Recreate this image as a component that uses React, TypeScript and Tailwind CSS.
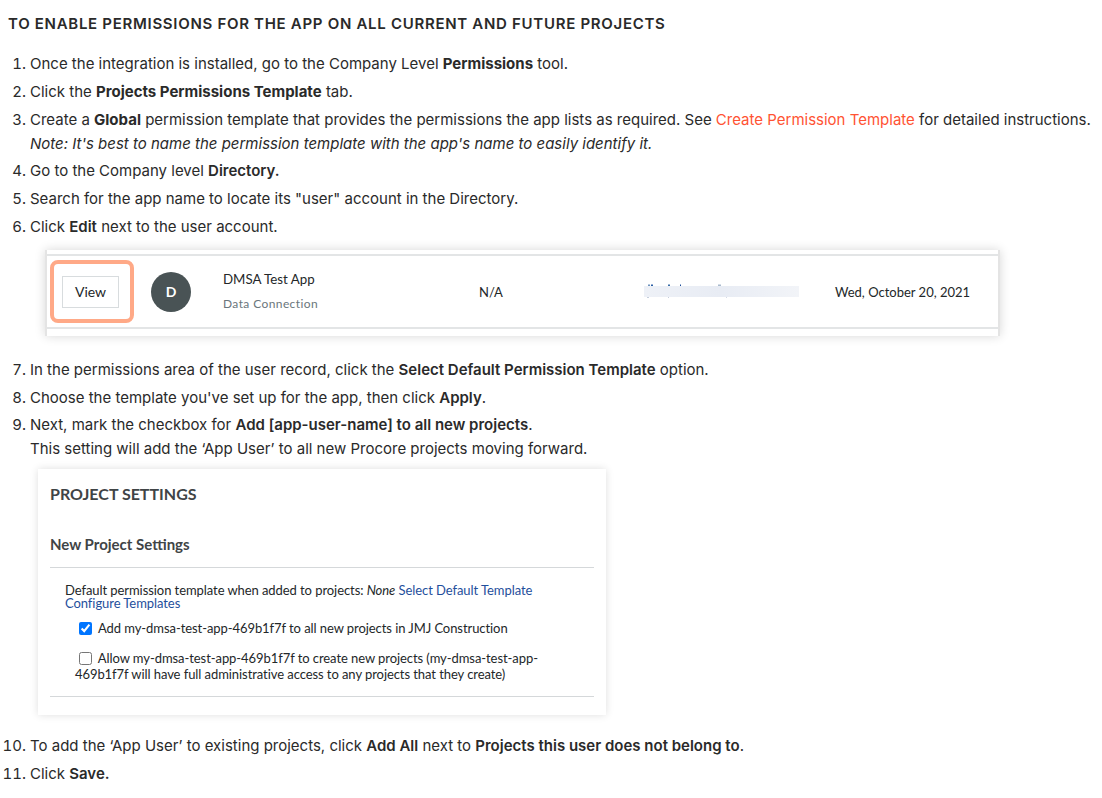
import type { ReactNode } from 'react';

function Step({ children, className = 'mb-1' }: { children: ReactNode; className?: string }) {
  return <li className={className}>{children}</li>;
}

/** Redacted email: blurred strip with the tops and tails of the letters poking out */
function RedactedEmail() {
  return (
    <div className="relative w-[155px] h-[11px]">
      <div className="h-full bg-gradient-to-r from-[#eef1f7] via-[#e8ecf4] to-[#f2f4f8] blur-[0.5px]" />
      <svg className="absolute left-0 top-[-2px]" width="155" height="15" viewBox="0 0 155 15">
        <rect x="4" y="0.5" width="2" height="1.5" fill="#6f93bd" />
        <rect x="7" y="0.5" width="2" height="1.5" fill="#2a5fa5" />
        <rect x="24" y="0.5" width="2" height="1.5" fill="#3a6ea8" />
        <rect x="36" y="0.5" width="1" height="1.5" fill="#1d4f9c" />
        <rect x="74" y="0.5" width="3" height="1.5" fill="#a9bacd" />
        <rect x="3" y="13" width="2" height="1" fill="#c5cedd" />
        <rect x="24" y="13" width="1" height="1" fill="#c5cedd" />
        <rect x="82" y="13" width="1" height="1" fill="#d5dbe6" />
      </svg>
    </div>
  );
}

/** Directory row screenshot */
function DirectoryCard() {
  return (
    <div className="mt-[11px] mb-[22px] ml-[15px] w-[955px] h-[86px] bg-white pt-1 pb-2 border-x-2 border-[#e4e4e4] shadow-[0_0_10px_rgba(0,0,0,0.16)] [font-family:Lato,sans-serif]">
      <div className="flex items-center h-[75px] border-y-2 border-[#e3e5e6] pl-[3px]">
        <div className="flex items-center w-[84px] h-[63px] pl-2 border-[4px] border-[#ffa987] rounded-lg">
          <div className="flex items-center justify-center w-[57px] h-8 border border-[#d8dcde] text-sm text-[#232729]">View</div>
        </div>
        <div className="flex items-center justify-center w-10 h-10 ml-[17px] rounded-full bg-[#495355] text-sm font-bold text-white">D</div>
        <div className="ml-8 w-[256px]">
          <div className="-mt-px text-[13.3px] leading-4 text-[#232729]">DMSA Test App</div>
          <div className="mt-[9px] text-xs leading-4 tracking-[0.4px] text-[#6a767c]">Data Connection</div>
        </div>
        <div className="w-[165px] text-[13px] text-[#232729]">N/A</div>
        <RedactedEmail />
        <div className="ml-9 text-[13px] text-[#232729]">Wed, October 20, 2021</div>
      </div>
    </div>
  );
}

/** Project settings screenshot */
function SettingsCard() {
  return (
    <div className="mt-2 mb-[19px] ml-2 w-[568px] h-[246px] bg-white px-3 shadow-[0_0_8px_rgba(0,0,0,0.13)] [font-family:Lato,sans-serif] text-[#232729]">
      <h3 className="pt-[14px] text-base leading-[22px] font-bold text-[#3f4446]">PROJECT SETTINGS</h3>
      <h4 className="mt-[29px] text-[15px] leading-5 font-bold text-[#3f4446]">New Project Settings</h4>
      <div className="mt-[13px] pl-[15px] pt-4 pb-[14px] border-y border-[#d5d8da] text-[13px] leading-[13px] tracking-[-0.07px]">
        <p>
          Default permission template when added to projects: <em>None</em>{' '}
          <span className="text-[#1f4f9c]">Select Default Template</span>
        </p>
        <p className="text-[#1f4f9c]">Configure Templates</p>
        <label className="flex items-center gap-[6px] mt-[10px] ml-[14px] leading-4">
          <input type="checkbox" defaultChecked className="m-0 w-[13px] h-[13px]" />
          <span>Add my-dmsa-test-app-469b1f7f to all new projects in JMJ Construction</span>
        </label>
        <p className="mt-[14px] ml-[10px] leading-4 w-[480px]">
          <input type="checkbox" className="m-0 ml-1 mr-[3px] w-[13px] h-[13px] align-[-2px]" /> Allow my-dmsa-test-app-469b1f7f to create new projects (my-dmsa-test-app-469b1f7f will have full administrative access to any projects that they create)
        </p>
      </div>
    </div>
  );
}

export default function App() {
  return (
    <div className="min-h-[798px] bg-white px-2 pt-[15px] [font-family:Inter,sans-serif] text-[15px] leading-6 text-[#2a2a2a]">
      <h2 className="text-[15px] leading-[18px] font-semibold tracking-[0.7px] uppercase">
        To enable permissions for the app on all current and future projects
      </h2>
      <ol className="mt-[19px] list-decimal pl-[22px]">
        <Step>Once the integration is installed, go to the Company Level <b className="font-bold">Permissions</b> tool.</Step>
        <Step>Click the <b className="font-bold">Projects Permissions Template</b> tab.</Step>
        <Step className="mb-[3px]">
          Create a <b className="font-bold">Global</b> permission template that provides the permissions the app lists as required. See{' '}
          <span className="text-[#ff5333]">Create Permission Template</span> for detailed instructions.
          <br />
          <em>Note: It's best to name the permission template with the app's name to easily identify it.</em>
        </Step>
        <Step>Go to the Company level <b className="font-semibold">Directory.</b></Step>
        <Step>Search for the app name to locate its "user" account in the Directory.</Step>
        <li>
          Click <b className="font-semibold">Edit</b> next to the user account.
          <DirectoryCard />
        </li>
        <Step>In the permissions area of the user record, click the <b className="font-semibold">Select Default Permission Template</b> option.</Step>
        <Step className="mb-[3px]">Choose the template you've set up for the app, then click <b className="font-semibold">Apply</b>.</Step>
        <li>
          Next, mark the checkbox for <b className="font-semibold">Add [app-user-name] to all new projects</b>.
          <br />
          This setting will add the ‘App User’ to all new Procore projects moving forward.
          <SettingsCard />
        </li>
        <Step>To add the ‘App User’ to existing projects, click <b className="font-semibold">Add All</b> next to <b className="font-semibold">Projects this user does not belong to</b>.</Step>
        <Step>Click <b className="font-semibold">Save.</b></Step>
      </ol>
    </div>
  );
}
